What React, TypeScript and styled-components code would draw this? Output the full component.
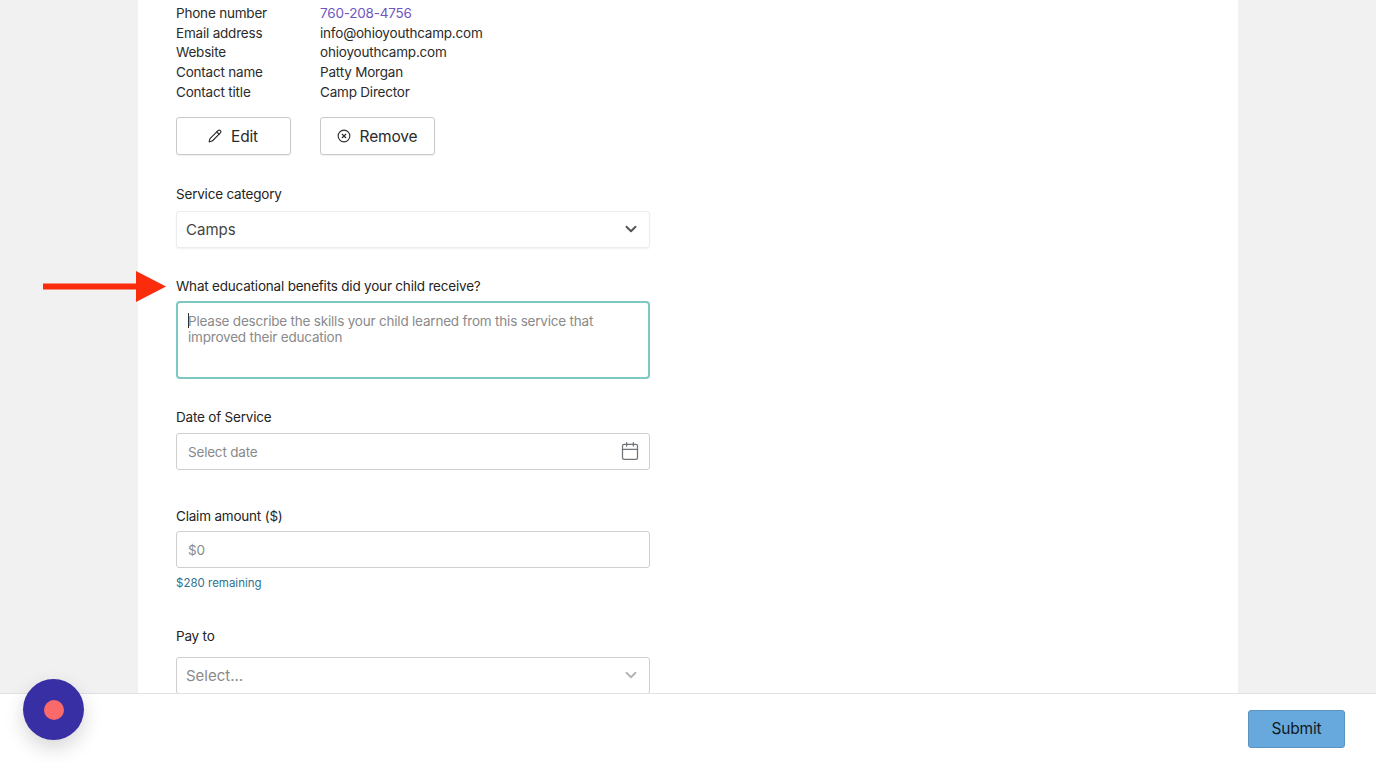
import React from "react";
import styled, { createGlobalStyle } from "styled-components";
import { Pencil, CircleX, Calendar, ChevronDown } from "lucide-react";

const GlobalStyle = createGlobalStyle`
  html, body {
    margin: 0;
    height: 100%;
    background: #f1f1f1;
    font-family: Inter, "Liberation Sans", sans-serif;
    color: #212121;
  }
  * { box-sizing: border-box; }
`;

const Page = styled.div`
  position: relative;
  display: flex;
  flex-direction: column;
  height: 100vh;
  overflow: hidden;
`;

const Scroller = styled.main`
  flex: 1;
  min-height: 0;
  overflow: hidden;
  display: flex;
  justify-content: flex-start;
  padding-left: 138px;
`;

const Panel = styled.div`
  width: 1100px;
  background: #fff;
  padding: 4px 38px 0;
`;

const InfoGrid = styled.dl`
  display: grid;
  grid-template-columns: 144px 1fr;
  margin: 0;
  font-size: 13.5px;
  letter-spacing: -0.2px;
  line-height: 19.7px;
`;

const InfoKey = styled.dt`
  color: #2b2b2b;
`;

const InfoValue = styled.dd<{ $link?: boolean }>`
  margin: 0;
  color: ${(p) => (p.$link ? "#6f55c2" : "#2b2b2b")};
`;

const ButtonRow = styled.div`
  display: flex;
  gap: 29px;
  margin-top: 14px;
`;

const OutlineButton = styled.button`
  width: 115px;
  height: 38px;
  display: flex;
  align-items: center;
  justify-content: center;
  gap: 9px;
  padding: 1px 1px 0 0;
  background: #fff;
  border: 1px solid #c9c9c9;
  border-radius: 3px;
  box-shadow: 0 1px 1px rgba(0, 0, 0, 0.06);
  font: inherit;
  font-size: 15.5px;
  letter-spacing: -0.15px;
  color: #2b2b2b;
`;

const Field = styled.div<{ $top: number; $gap: number }>`
  margin-top: ${(p) => p.$top}px;
  width: 474px;
  display: flex;
  flex-direction: column;
  gap: ${(p) => p.$gap}px;
`;

const Label = styled.label`
  font-size: 13.5px;
  letter-spacing: -0.2px;
  line-height: 20px;
  color: #242424;
`;

const SelectBox = styled.div<{ $soft?: boolean }>`
  height: 37px;
  display: flex;
  align-items: center;
  justify-content: space-between;
  padding: 0 9px;
  background: #fff;
  border: 1px solid ${(p) => (p.$soft ? "#ececec" : "#cfcfcf")};
  border-radius: 3px;
  box-shadow: ${(p) => (p.$soft ? "0 1px 2px rgba(0,0,0,0.06)" : "none")};
  font-size: 15px;
  color: ${(p) => (p.$soft ? "#444" : "#8a8a8a")};
`;

const AreaWrap = styled.div`
  position: relative;
  height: 78px;
`;

const Area = styled.textarea`
  display: block;
  width: 100%;
  height: 100%;
  padding: 10px 10px;
  resize: none;
  border: 2px solid #7cc8c3;
  border-radius: 4px;
  outline: none;
  font: inherit;
  font-size: 13.5px;
  letter-spacing: -0.2px;
  line-height: 16px;
  &::placeholder {
    color: #8a8a8a;
    opacity: 1;
  }
`;

const Caret = styled.span`
  position: absolute;
  left: 12px;
  top: 12px;
  width: 1px;
  height: 15px;
  background: #333;
`;

const InputWrap = styled.div`
  position: relative;
  height: 37px;
`;

const TextInput = styled.input`
  width: 100%;
  height: 100%;
  padding: 1px 11px 0;
  background: #fff;
  border: 1px solid #cfcfcf;
  border-radius: 3px;
  font: inherit;
  font-size: 13.5px;
  letter-spacing: -0.2px;
  &::placeholder {
    color: #8a8a8a;
    opacity: 1;
  }
`;

const InputIcon = styled.span`
  position: absolute;
  right: 10px;
  top: 8px;
  display: flex;
  color: #6f7479;
`;

const Hint = styled.div`
  margin-top: 7px;
  font-size: 11.5px;
  line-height: 16px;
  color: #2f7391;
`;

const Footer = styled.footer`
  height: 70px;
  flex: none;
  display: flex;
  align-items: center;
  justify-content: flex-end;
  padding: 0 31px 0 0;
  background: #fff;
  border-top: 1px solid #e2e2e2;
`;

const SubmitButton = styled.button`
  width: 97px;
  height: 38px;
  background: #67a9dc;
  border: 1px solid #5c94c0;
  border-radius: 3px;
  font: inherit;
  font-size: 15.5px;
  letter-spacing: -0.15px;
  color: #101a24;
`;

const RecordButton = styled.div`
  position: absolute;
  left: 23px;
  top: 679px;
  width: 61px;
  height: 61px;
  display: flex;
  align-items: center;
  justify-content: center;
  border-radius: 50%;
  background: #372fa3;
  box-shadow: 0 8px 20px rgba(0, 0, 0, 0.16);
`;

const RecordDot = styled.span`
  width: 20px;
  height: 20px;
  border-radius: 50%;
  background: #fb6a6a;
`;

const Arrow = styled.svg`
  position: absolute;
  left: 43px;
  top: 271px;
`;

const info = [
  ["Phone number", "760-208-4756", true],
  ["Email address", "info@ohioyouthcamp.com", false],
  ["Website", "ohioyouthcamp.com", false],
  ["Contact name", "Patty Morgan", false],
  ["Contact title", "Camp Director", false],
] as const;

export default function App() {
  return (
    <>
      <GlobalStyle />
      <Page>
        <Scroller>
          <Panel>
            <InfoGrid>
              {info.map(([key, value, link]) => (
                <React.Fragment key={key}>
                  <InfoKey>{key}</InfoKey>
                  <InfoValue $link={link}>{value}</InfoValue>
                </React.Fragment>
              ))}
            </InfoGrid>

            <ButtonRow>
              <OutlineButton>
                <Pencil size={14} strokeWidth={1.9} />
                Edit
              </OutlineButton>
              <OutlineButton>
                <CircleX size={14} strokeWidth={1.9} />
                Remove
              </OutlineButton>
            </ButtonRow>

            <Field $top={29} $gap={7}>
              <Label>Service category</Label>
              <SelectBox $soft>
                Camps
                <ChevronDown size={18} strokeWidth={2.6} color="#555" />
              </SelectBox>
            </Field>

            <Field $top={28} $gap={5}>
              <Label>What educational benefits did your child receive?</Label>
              <AreaWrap>
                <Area placeholder="Please describe the skills your child learned from this service that improved their education" />
                <Caret />
              </AreaWrap>
            </Field>

            <Field $top={28} $gap={6}>
              <Label>Date of Service</Label>
              <InputWrap>
                <TextInput placeholder="Select date" />
                <InputIcon>
                  <Calendar size={20} strokeWidth={1.5} />
                </InputIcon>
              </InputWrap>
            </Field>

            <Field $top={36} $gap={5}>
              <Label>Claim amount ($)</Label>
              <InputWrap>
                <TextInput placeholder="$0" />
              </InputWrap>
            </Field>
            <Hint>$280 remaining</Hint>

            <Field $top={35} $gap={11}>
              <Label>Pay to</Label>
              <SelectBox>
                Select...
                <ChevronDown size={18} strokeWidth={2.6} color="#b5b5b5" />
              </SelectBox>
            </Field>
          </Panel>
        </Scroller>

        <Footer>
          <SubmitButton>Submit</SubmitButton>
        </Footer>

        <RecordButton>
          <RecordDot />
        </RecordButton>

        <Arrow width="123" height="31" viewBox="0 0 123 31">
          <rect x="0" y="12.5" width="95" height="6" fill="#fb2c0c" />
          <polygon points="93,0 123,15.5 93,31" fill="#fb2c0c" />
        </Arrow>
      </Page>
    </>
  );
}
